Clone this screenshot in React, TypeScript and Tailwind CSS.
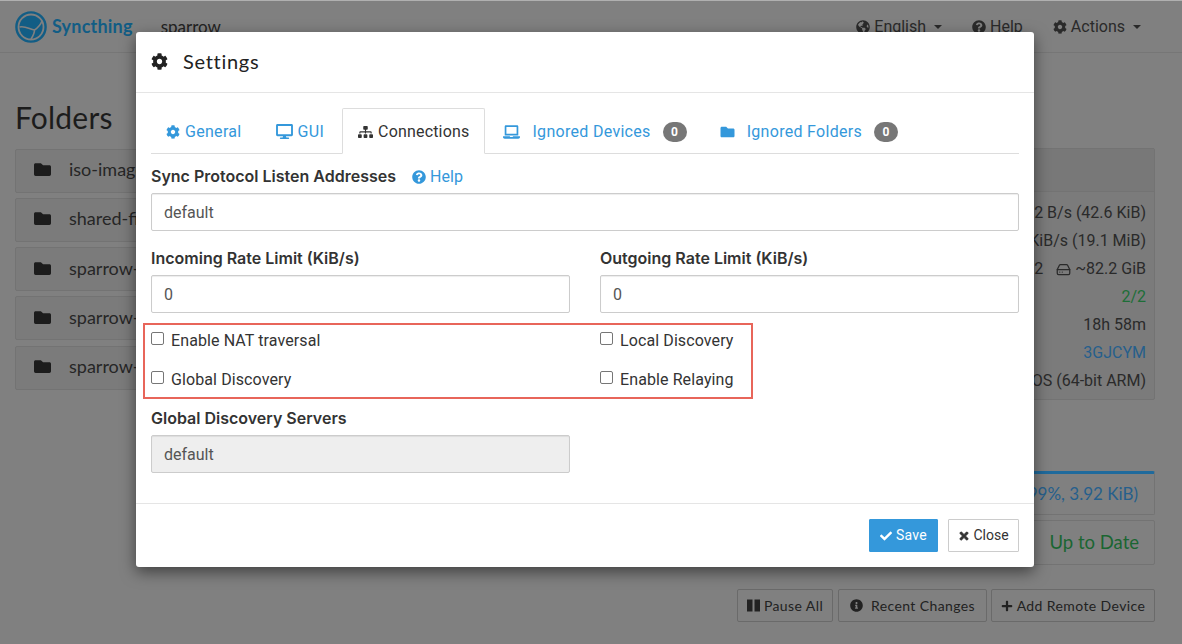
import type { ReactNode } from 'react'
import { LuHardDrive } from 'react-icons/lu'
import {
  FaCog,
  FaDesktop,
  FaSitemap,
  FaLaptop,
  FaFolder,
  FaQuestionCircle,
  FaCheck,
  FaTimes,
  FaInfoCircle,
  FaPlus,
  FaGlobeAmericas,
} from 'react-icons/fa'

const folders = ['iso-images', 'shared-files', 'sparrow-docs', 'sparrow-media', 'sparrow-photos']

const deviceRows: { text: ReactNode; color: string }[] = [
  { text: '2 B/s (42.6 KiB)', color: 'text-[#2a2a2a]' },
  { text: '2 KiB/s (19.1 MiB)', color: 'text-[#2a2a2a]' },
  {
    text: (
      <span className="flex items-center">
        <span className="mr-[13px]">82</span>
        <LuHardDrive className="w-[15px] h-[15px] mr-[4px]" />
        ~82.2 GiB
      </span>
    ),
    color: 'text-[#2a2a2a]',
  },
  { text: '2/2', color: 'text-[#1d6e37]' },
  { text: '18h 58m', color: 'text-[#2a2a2a]' },
  { text: '3GJCYM', color: 'text-[#265f8c]' },
  { text: 'macOS (64-bit ARM)', color: 'text-[#2a2a2a]' },
]

function Logo() {
  return (
    <svg viewBox="0 0 32 32" className="w-8 h-8 shrink-0">
      <circle cx="16" cy="16" r="14.6" fill="none" stroke="#125d85" strokeWidth="2.4" />
      <circle cx="16" cy="16" r="11.6" fill="#125d85" />
      <path d="M4.5 16c5-1.5 10 2 15 3M19.500 19c3-2 6-5 7.500-9M19.500 19c0 3-1.500 6-3.500 9" fill="none" stroke="#808080" strokeWidth="1.6" />
    </svg>
  )
}

function FolderRow({ name }: { name: string }) {
  return (
    <div className="h-[44px] mb-[5.33px] pb-[2px] flex items-center pl-[18px] border border-[#737373] bg-[#7b7b7b] rounded-[2px] font-['Lato',sans-serif] text-[18px] text-[#262626]">
      <FaFolder className="w-[17px] h-[17px] mr-[18px] text-[#1c1c1c]" />
      {name}
    </div>
  )
}

function PageBehind() {
  return (
    <div className="h-[644px] overflow-hidden bg-[#808080] border-t border-t-[#b0b0b0] font-['Roboto',sans-serif]">
      <header className="h-[52px] flex items-center border-b border-[#767676] pl-[15px] pr-[41px]">
        <Logo />
        <span className="ml-[5px] font-['Lato',sans-serif] font-bold text-[18px] tracking-[0.2px] text-[#125d85]">Syncthing</span>
        <span className="ml-[28px] font-['Lato',sans-serif] text-[17px] text-[#222]">sparrow</span>
        <nav className="ml-auto flex items-center gap-[30px] text-[16px] text-[#2a2a2a] pt-[1px]">
          <span className="flex items-center gap-1">
            <FaGlobeAmericas className="w-[14px] h-[14px]" /> English
            <span className="ml-1 border-x-[4px] border-x-transparent border-t-[4px] border-t-[#2a2a2a]" />
          </span>
          <span className="flex items-center gap-1">
            <FaQuestionCircle className="w-[14px] h-[14px]" /> Help
          </span>
          <span className="flex items-center gap-1">
            <FaCog className="w-[14px] h-[14px]" /> Actions
            <span className="ml-1 border-x-[4px] border-x-transparent border-t-[4px] border-t-[#2a2a2a]" />
          </span>
        </nav>
      </header>

      <div className="flex justify-between pl-[15px] pr-[27px]">
        <section className="w-[560px]">
          <h1 className="mt-[46px] mb-[13.5px] h-[36px] leading-[36px] font-['Lato',sans-serif] text-[30px] tracking-[0.2px] text-[#1c1c1c]">Folders</h1>
          {folders.map((name) => (
            <FolderRow key={name} name={name} />
          ))}
        </section>

        <section className="w-[300px] pt-[95px] flex flex-col items-stretch">
          <div className="h-[252px] border border-[#737373] rounded-[2px] bg-[#7b7b7b]">
            <div className="h-[43px] border-b border-[#737373] bg-[#787878]" />
            <div className="pt-[7px] pr-[8px] text-[16px]">
              {deviceRows.map((row, i) => (
                <div key={i} className={`h-[28px] flex items-center justify-end ${row.color}`}>
                  {row.text}
                </div>
              ))}
            </div>
          </div>
          <div className="mt-[71px] h-[44px] border border-[#737373] border-t-[3px] border-t-[#1f6a9c] rounded-[2px] flex items-center justify-end pr-[16px] font-['Lato',sans-serif] text-[17px] text-[#265f8c]">
            (99%, 3.92 KiB)
          </div>
          <div className="mt-[5px] h-[45px] border border-[#737373] rounded-[2px] flex items-center justify-end pr-[15px] font-['Lato',sans-serif] text-[18.5px] text-[#1a6632]">
            Up to Date
          </div>
        </section>
      </div>

      <div className="mt-[24px] pr-[27px] flex justify-end font-['Lato',sans-serif] text-[14px] tracking-[0.4px] text-[#222]">
        <span className="h-[33px] w-[96px] flex items-center justify-center gap-1 border border-[#6a6a6a] rounded-[2px]">
          <svg viewBox="0 0 13 13" className="w-[13px] h-[13px]" fill="currentColor">
            <rect x="0" y="0.5" width="5.5" height="12" />
            <rect x="7.5" y="0.5" width="5.5" height="12" />
          </svg>
          Pause All
        </span>
        <span className="ml-[5px] h-[33px] w-[149px] flex items-center justify-center gap-2 border border-[#6a6a6a] rounded-[2px]">
          <FaInfoCircle className="w-[13px] h-[13px]" /> Recent Changes
        </span>
        <span className="ml-[4px] h-[33px] w-[164px] flex items-center justify-center gap-1 border border-[#6a6a6a] rounded-[2px]">
          <FaPlus className="w-[12px] h-[12px]" /> Add Remote Device
        </span>
      </div>
    </div>
  )
}

function Tab({ children, active, className }: { children: ReactNode; active?: boolean; className?: string }) {
  return (
    <div
      className={
        active
          ? 'h-[46px] -mb-px flex items-center px-[15px] pt-[1px] border border-[#ddd] border-b-white rounded-t-[2px] bg-white text-[#333] tracking-[0.18px] ' + (className ?? '')
          : 'h-[45px] flex items-center px-[15px] pt-[2px] text-[#3498db] tracking-[0.3px] ' + (className ?? '')
      }
    >
      {children}
    </div>
  )
}

function CountBadge() {
  return (
    <span className="ml-[12px] w-[24px] h-[20px] rounded-full bg-[#777] text-white text-[12px] font-bold flex items-center justify-center">
      0
    </span>
  )
}

function Field({ value, disabled }: { value: string; disabled?: boolean }) {
  return (
    <input
      readOnly
      value={value}
      disabled={disabled}
      className={
        'block w-full h-[38px] px-3 border border-[#ccc] rounded-[2px] text-[16px] text-[#555] outline-none shadow-[inset_0_1px_1px_rgba(0,0,0,0.075)] ' +
        (disabled ? 'bg-[#eee]' : 'bg-white')
      }
    />
  )
}

function FieldLabel({ children }: { children: ReactNode }) {
  return <div className="h-[20px] pb-[2px] flex items-center font-['Inter',sans-serif] font-semibold text-[16px] text-[#333]">{children}</div>
}

function Check({ label }: { label: string }) {
  return (
    <label className="h-[20px] flex items-center text-[16px] tracking-[0.1px] text-[#333]">
      <input type="checkbox" className="w-[13px] h-[13px] mr-[7px] -mt-[5px] appearance-none border border-[#767676] rounded-[2px] bg-white" />
      {label}
    </label>
  )
}

function SettingsModal() {
  return (
    <div className="absolute left-[136px] top-[32px] w-[898px] h-[535px] flex flex-col bg-white rounded-[3px] shadow-[0_5px_15px_rgba(0,0,0,0.5)] font-['Roboto',sans-serif] text-[16px] text-[#333]">
      <div className="h-[61px] shrink-0 flex items-center pl-[15px] pb-[2px] border-b border-[#e5e5e5]">
        <FaCog className="w-[17px] h-[17px] mr-[15px] text-[#222]" />
        <span className="font-['Lato',sans-serif] text-[20px] tracking-[0.7px] text-[#222]">Settings</span>
      </div>

      <div className="flex-1 px-[15px] pt-[15px]">
        <div className="h-[46px] flex items-end border-b border-[#ddd]">
          <Tab>
            <FaCog className="w-[14px] h-[14px] mr-[5px]" />
            General
          </Tab>
          <Tab className="ml-[4px]">
            <FaDesktop className="w-[17px] h-[15px] mr-[5px]" />
            GUI
          </Tab>
          <Tab active className="ml-[3px]">
            <FaSitemap className="w-[15px] h-[14px] mr-[5px]" />
            Connections
          </Tab>
          <Tab className="ml-[3px]">
            <FaLaptop className="w-[17px] h-[14px] mr-[12px]" />
            Ignored Devices
            <CountBadge />
          </Tab>
          <Tab className="ml-[3px]">
            <FaFolder className="w-[15px] h-[14px] mr-[12px]" />
            Ignored Folders
            <CountBadge />
          </Tab>
        </div>

        <div className="mt-[13px] h-[20px] flex items-center">
          <FieldLabel>Sync Protocol Listen Addresses</FieldLabel>
          <span className="ml-[16px] flex items-center gap-[4px] tracking-[0.1px] text-[#3498db]">
            <FaQuestionCircle className="w-[14px] h-[14px]" />
            Help
          </span>
        </div>
        <div className="mt-[6px]">
          <Field value="default" />
        </div>

        <div className="mt-[18px] grid grid-cols-2 gap-x-[30px]">
          <div>
            <FieldLabel>Incoming Rate Limit (KiB/s)</FieldLabel>
            <div className="mt-[6px]">
              <Field value="0" />
            </div>
          </div>
          <div>
            <FieldLabel>Outgoing Rate Limit (KiB/s)</FieldLabel>
            <div className="mt-[6px]">
              <Field value="0" />
            </div>
          </div>
        </div>

        <div className="relative mt-[18px] grid grid-cols-2 gap-x-[30px] gap-y-[19px]">
          <Check label="Enable NAT traversal" />
          <Check label="Local Discovery" />
          <Check label="Global Discovery" />
          <Check label="Enable Relaying" />
          <div className="absolute -left-[8px] -top-[8px] w-[610px] h-[76px] border-2 border-[#e8655a] pointer-events-none" />
        </div>

        <div className="mt-[19px]">
          <FieldLabel>Global Discovery Servers</FieldLabel>
        </div>
        <div className="mt-[6px] w-[419px]">
          <Field value="default" disabled />
        </div>
      </div>

      <div className="h-[64px] shrink-0 flex items-center justify-end gap-[10px] px-[15px] border-t border-[#e5e5e5] text-[14px]">
        <button type="button" className="h-[33px] w-[69px] flex items-center justify-center gap-[4px] bg-[#3498db] border border-[#3498db] rounded-[1px] tracking-[0.3px] text-white">
          <FaCheck className="w-[12px] h-[12px]" />
          Save
        </button>
        <button type="button" className="h-[33px] w-[71px] flex items-center justify-center gap-[3px] bg-white border border-[#ccc] rounded-[1px] text-[#333]">
          <FaTimes className="w-[12px] h-[12px] stroke-current stroke-[30px]" />
          Close
        </button>
      </div>
    </div>
  )
}

export default function App() {
  return (
    <div className="relative w-[1182px] h-[644px] overflow-hidden">
      <PageBehind />
      <SettingsModal />
    </div>
  )
}
